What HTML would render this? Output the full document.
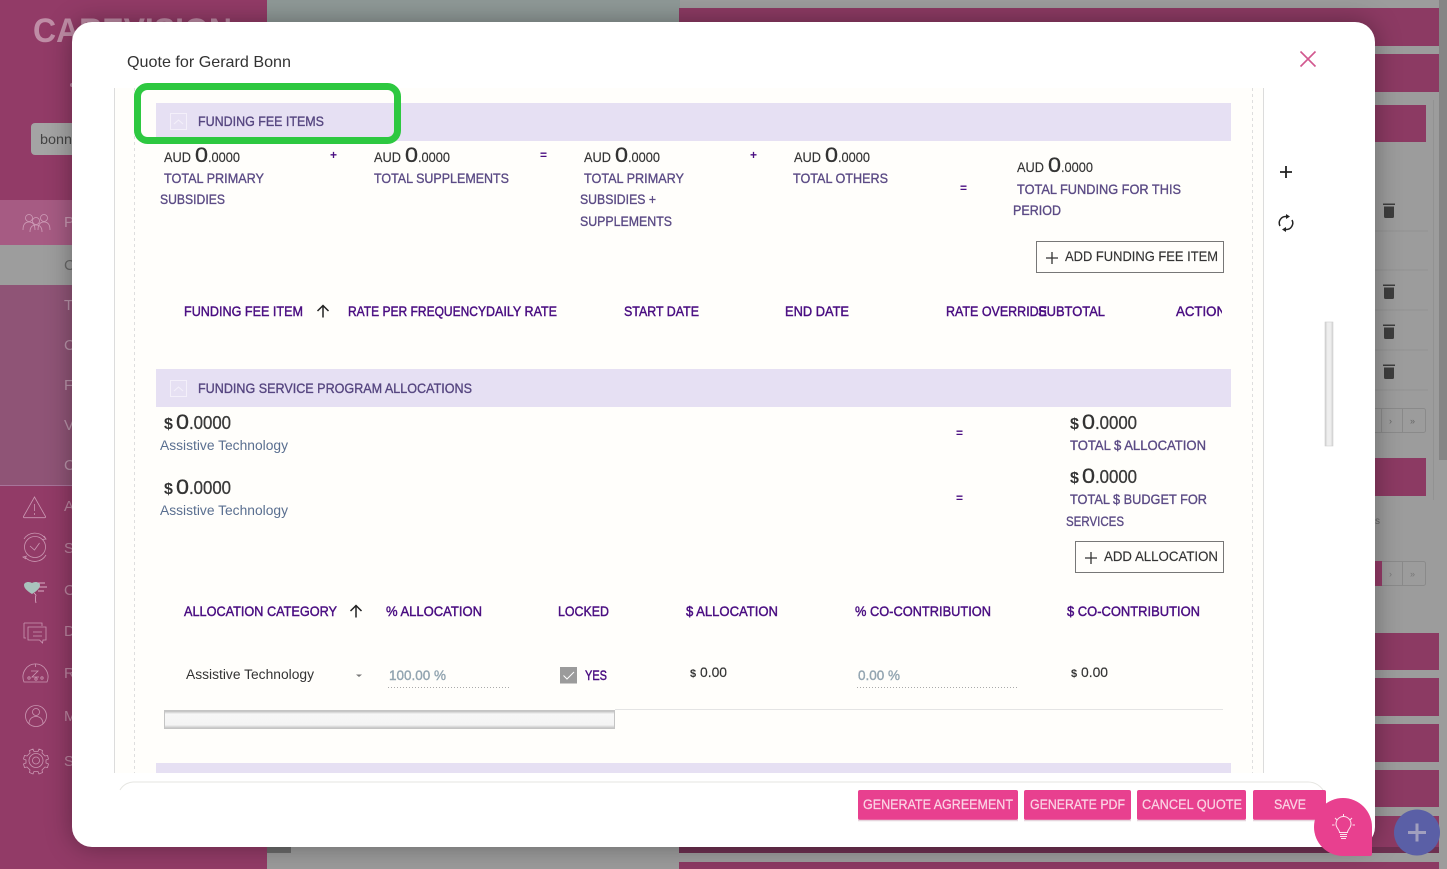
<!DOCTYPE html>
<html lang="en">
<head>
<meta charset="utf-8">
<title>Quote for Gerard Bonn</title>
<style>
html,body{margin:0;padding:0;width:1447px;height:869px;overflow:hidden;background:#9c9c9c;font-family:"Liberation Sans",sans-serif}
svg{position:absolute;left:0;top:0;display:block}
svg text{font-family:"Liberation Sans",sans-serif;white-space:pre}
.modal{position:absolute;left:72px;top:22px;width:1303px;height:825px;background:#fff;border-radius:20px;box-shadow:0 0 26px rgba(0,0,0,.34)}
.h{font-size:14px;fill:#4a0e82;stroke:#4a0e82;stroke-width:.45}
.l{font-size:14px;fill:#5b4b85;stroke:#5b4b85;stroke-width:.35}
.sec{font-size:14px;fill:#564680;stroke:#564680;stroke-width:.35}
.a{font-size:14px;fill:#333;stroke:#333;stroke-width:.15}
.z{font-size:21px;fill:#333;stroke:#333;stroke-width:.3}
.d{font-size:18px;fill:#3a3a3a;stroke:#3a3a3a;stroke-width:.3}
.op{font-size:12px;fill:#4a0e82;font-weight:bold}
.at{font-size:13.5px;fill:#5a6f90}
.btn{font-size:14px;fill:#333;stroke:#333;stroke-width:.15}
.inp{font-size:14px;fill:#93a5b1;stroke:#93a5b1;stroke-width:.4}
.pk{font-size:13.5px;fill:#fbd3e4;stroke:#fbd3e4;stroke-width:.25}
.side{font-size:15px;fill:#ffffff;fill-opacity:.38}
</style>
</head>
<body>
<svg width="1447" height="869" viewBox="0 0 1447 869">
  <rect x="0" y="0" width="1447" height="869" fill="#9c9c9c"/>
  <rect x="267" y="0" width="413" height="869" fill="#8f9997"/>
  <rect x="267" y="847" width="413" height="22" fill="#9b9b9b"/>
  <rect x="267" y="847" width="24" height="6" fill="#6a6a6a"/>

  <rect x="0" y="0" width="267" height="869" fill="#923b67"/>
  <rect x="0" y="200" width="267" height="45" fill="#a65b83"/>
  <rect x="0" y="245" width="267" height="40" fill="#9d9d9d"/>
  <rect x="0" y="285" width="267" height="200" fill="#8f5476"/>
  <rect x="0" y="485" width="267" height="1" fill="#a8749a"/>

  <text x="33" y="42" font-size="34" font-weight="bold" fill="#fff" fill-opacity=".42" textLength="199" lengthAdjust="spacingAndGlyphs">CAREVISION</text>
  <circle cx="72" cy="85" r="2" fill="#fff" fill-opacity=".4"/>
  <rect x="31" y="123" width="60" height="32" rx="4" fill="#a4a4a4"/>
  <text x="40" y="144" font-size="14" fill="#444" textLength="32" lengthAdjust="spacingAndGlyphs">bonn</text>

  <text class="side" x="64" y="227">P</text>
  <text x="64" y="270" font-size="15" fill="#666">C</text>
  <text class="side" x="64" y="310">T</text>
  <text class="side" x="64" y="350">C</text>
  <text class="side" x="64" y="390">F</text>
  <text class="side" x="64" y="430">V</text>
  <text class="side" x="64" y="470">C</text>
  <text class="side" x="64" y="511">A</text>
  <text class="side" x="64" y="553">S</text>
  <text class="side" x="64" y="595">C</text>
  <text class="side" x="64" y="636">D</text>
  <text class="side" x="64" y="678">R</text>
  <text class="side" x="64" y="721">M</text>
  <text class="side" x="64" y="766">S</text>

  <g fill="none" stroke="#d9aec5" stroke-width=".8" opacity=".8">
    <g>
      <circle cx="29" cy="218" r="3.5"/><path d="M23 230c0-5 2-8 6-8s6 3 6 8"/>
      <circle cx="44" cy="218" r="3.5"/><path d="M38 230c0-5 2-8 6-8s6 3 6 8"/>
      <circle cx="36" cy="221" r="3.5"/><path d="M30 232c0-5 2-7 6-7s6 2 6 7"/>
    </g>
    <path d="M34.500 497l11 19.500a.8.8 0 0 1-.7 1.200H24.200a.8.800 0 0 1-.7-1.200z"/>
    <path d="M34.500 504v7M34.500 513v2"/>
    <circle cx="35" cy="547" r="10.500"/>
    <path d="M30 546l4.500 4 5-7"/>
    <path d="M24 539a13 13 0 0 1 21-1M46 555a13 13 0 0 1-21 2M44 536l2 3-4 .5M26 559l-3-2 4-1"/>
    <path d="M24 623h18v3M24 623v15h2"/>
    <path d="M28 627h18v13h-3l-.5 3-3-3H28z"/>
    <path d="M33 632h9M33 636h9"/>
    <path d="M24 682a12.500 13 0 1 1 23 0z"/>
    <path d="M35.500 664v3M31 671h7l-6 6h7"/>
    <circle cx="29" cy="678" r="1.200"/><circle cx="36" cy="679" r="1.200"/><circle cx="42" cy="678" r="1.200"/>
    <circle cx="36" cy="716" r="10.500"/>
    <circle cx="36" cy="712" r="3.500"/>
    <path d="M29 724c0-5 3-7.500 7-7.500s7 2.500 7 7.500"/>
    <circle cx="36" cy="760.500" r="7"/><circle cx="36" cy="760.500" r="3.500"/>
    <path d="M33 749l1 2.500h4l1-2.500 3.500 1.500-.5 2.500 3 3 2.500-.5 1 3.500-2.500 1v3l2.500 1-1 3.500-2.500-.5-3 3 .5 2.500-3.500 1.500-1-2.500h-4l-1 2.500-3.500-1.500.5-2.500-3-3-2.500.5-1-3.500 2.500-1v-3l-2.500-1 1-3.500 2.500.5 3-3-.5-2.500z"/>
  </g>
  <path d="M24 585c0-3 5-4 8-2 3-2 8-1 8 2 0 4-5 7-8 9-3-2-8-5-8-9z" fill="#a9c3bd"/>
  <path d="M34 593l2 2M36 595c-1 3-.5 6 0 8" fill="none" stroke="#d9aec5" stroke-width=".8"/>
  <path d="M38 583h7M39 587h8M38 591h6" fill="none" stroke="#d9aec5" stroke-width="1"/>

  <g fill="#8c3a63">
    <rect x="679" y="8" width="760" height="38"/>
    <rect x="679" y="54" width="760" height="38"/>
    <rect x="679" y="105" width="747" height="37"/>
    <rect x="679" y="458" width="747" height="38"/>
    <rect x="679" y="633" width="760" height="37"/>
    <rect x="679" y="678" width="760" height="38"/>
    <rect x="679" y="724" width="760" height="38"/>
    <rect x="679" y="770" width="760" height="37"/>
    <rect x="679" y="816" width="760" height="37"/>
    <rect x="679" y="862" width="760" height="7"/>
  </g>
  <rect x="679" y="847" width="760" height="6" fill="#6d3050"/>
  <rect x="1439" y="0" width="8" height="460" fill="#858585"/>
  <rect x="1439" y="460" width="8" height="409" fill="#9c9c9c"/>
  <rect x="1433" y="100" width="1" height="400" fill="#929292"/>
  <g stroke="#929292" stroke-width="1">
    <path d="M1375 231h53M1375 270h53M1375 310h53M1375 350h53M1375 390h53"/>
  </g>
  <g fill="#3d3d3d" transform="translate(0,-1)">
    <path d="M1383 204.500h12v1.500h-12zM1384 207.500h10v10a1.500 1.500 0 0 1-1.500 1.500h-7a1.500 1.500 0 0 1-1.500-1.500z"/>
    <path d="M1383 285.500h12v1.500h-12zM1384 288.500h10v10a1.500 1.500 0 0 1-1.500 1.500h-7a1.500 1.500 0 0 1-1.500-1.500z"/>
    <path d="M1383 325.500h12v1.500h-12zM1384 328.500h10v10a1.500 1.500 0 0 1-1.500 1.500h-7a1.500 1.500 0 0 1-1.500-1.500z"/>
    <path d="M1383 365.500h12v1.500h-12zM1384 368.500h10v10a1.500 1.500 0 0 1-1.500 1.500h-7a1.500 1.500 0 0 1-1.500-1.500z"/>
  </g>
  <g fill="none" stroke="#8a8a8a">
    <rect x="1370.500" y="408.500" width="55" height="24" rx="2"/>
    <path d="M1381.500 408.500v24M1402.500 408.500v24"/>
    <rect x="1370.500" y="561.500" width="55" height="24" rx="2"/>
    <path d="M1402.500 561.500v24"/>
  </g>
  <rect x="1370" y="561" width="12" height="25" fill="#953b68"/>
  <text x="1389" y="424" font-size="9" fill="#666">›</text>
  <text x="1410" y="424" font-size="9" fill="#666">»</text>
  <text x="1389" y="577" font-size="9" fill="#777">›</text>
  <text x="1410" y="577" font-size="9" fill="#777">»</text>
  <text x="1375" y="524" font-size="10" fill="#666">s</text>
</svg>

<div class="modal"></div>

<svg width="1447" height="869" viewBox="0 0 1447 869">
  <rect x="115" y="88" width="1148" height="685" fill="#fffefb"/>
  <path d="M114.500 88v685M1263.500 88v685" stroke="#dcdcdc" stroke-width="1" fill="none"/>
  <path d="M134.500 88v685M1252.500 88v685" stroke="#dedede" stroke-width="1" stroke-dasharray="3 3" fill="none"/>

  <text x="127" y="67" font-size="16" fill="#333" textLength="164" lengthAdjust="spacingAndGlyphs">Quote for Gerard Bonn</text>
  <path d="M1300.500 51.500l15 15M1315.500 51.500l-15 15" stroke="#d2588f" stroke-width="1.600" fill="none"/>

  <rect x="156" y="103" width="1075" height="38" fill="#e6e0f3"/>
  <rect x="156" y="369" width="1075" height="38" fill="#e6e0f3"/>
  <rect x="156" y="763" width="1075" height="10" fill="#e6e0f3"/>

  <g fill="none" stroke="#f4f0fa" stroke-width="1">
    <rect x="170.500" y="113.500" width="16" height="16"/>
    <path d="M174 124l4.500-4 4.500 4"/>
    <rect x="170.500" y="380.500" width="16" height="16"/>
    <path d="M174 391l4.500-4 4.500 4"/>
  </g>

  <text class="sec" x="198" y="126" textLength="126" lengthAdjust="spacingAndGlyphs">FUNDING FEE ITEMS</text>
  <text class="sec" x="198" y="393" textLength="274" lengthAdjust="spacingAndGlyphs">FUNDING SERVICE PROGRAM ALLOCATIONS</text>

  <rect x="137.500" y="86.500" width="260" height="54" rx="10" fill="none" stroke="#2dc840" stroke-width="7"/>

  <text class="a" x="164" y="162" textLength="27" lengthAdjust="spacingAndGlyphs">AUD</text>
  <text class="z" x="195" y="162" textLength="13" lengthAdjust="spacingAndGlyphs">0</text>
  <text class="a" x="208" y="162" font-size="15" textLength="32" lengthAdjust="spacingAndGlyphs">.0000</text>
  <text class="a" x="374" y="162" textLength="27" lengthAdjust="spacingAndGlyphs">AUD</text>
  <text class="z" x="405" y="162" textLength="13" lengthAdjust="spacingAndGlyphs">0</text>
  <text class="a" x="418" y="162" textLength="32" lengthAdjust="spacingAndGlyphs">.0000</text>
  <text class="a" x="584" y="162" textLength="27" lengthAdjust="spacingAndGlyphs">AUD</text>
  <text class="z" x="615" y="162" textLength="13" lengthAdjust="spacingAndGlyphs">0</text>
  <text class="a" x="628" y="162" textLength="32" lengthAdjust="spacingAndGlyphs">.0000</text>
  <text class="a" x="794" y="162" textLength="27" lengthAdjust="spacingAndGlyphs">AUD</text>
  <text class="z" x="825" y="162" textLength="13" lengthAdjust="spacingAndGlyphs">0</text>
  <text class="a" x="838" y="162" textLength="32" lengthAdjust="spacingAndGlyphs">.0000</text>
  <text class="a" x="1017" y="172" textLength="27" lengthAdjust="spacingAndGlyphs">AUD</text>
  <text class="z" x="1048" y="172" textLength="13" lengthAdjust="spacingAndGlyphs">0</text>
  <text class="a" x="1061" y="172" textLength="32" lengthAdjust="spacingAndGlyphs">.0000</text>

  <text class="l" x="164" y="183" textLength="100" lengthAdjust="spacingAndGlyphs">TOTAL PRIMARY</text>
  <text class="l" x="160" y="204" textLength="65" lengthAdjust="spacingAndGlyphs">SUBSIDIES</text>
  <text class="l" x="374" y="183" textLength="135" lengthAdjust="spacingAndGlyphs">TOTAL SUPPLEMENTS</text>
  <text class="l" x="584" y="183" textLength="100" lengthAdjust="spacingAndGlyphs">TOTAL PRIMARY</text>
  <text class="l" x="580" y="204" textLength="76" lengthAdjust="spacingAndGlyphs">SUBSIDIES +</text>
  <text class="l" x="580" y="226" textLength="92" lengthAdjust="spacingAndGlyphs">SUPPLEMENTS</text>
  <text class="l" x="793" y="183" textLength="95" lengthAdjust="spacingAndGlyphs">TOTAL OTHERS</text>
  <text class="l" x="1017" y="194" textLength="164" lengthAdjust="spacingAndGlyphs">TOTAL FUNDING FOR THIS</text>
  <text class="l" x="1013" y="215" textLength="48" lengthAdjust="spacingAndGlyphs">PERIOD</text>

  <text class="op" x="330" y="159">+</text>
  <text class="op" x="540" y="159">=</text>
  <text class="op" x="750" y="159">+</text>
  <text class="op" x="960" y="192">=</text>

  <rect x="1036.500" y="241.500" width="187" height="31" fill="none" stroke="#777"/>
  <path d="M1046 258h12M1052 252v12" stroke="#333" stroke-width="1.300" fill="none"/>
  <text class="btn" x="1065" y="261" textLength="153" lengthAdjust="spacingAndGlyphs">ADD FUNDING FEE ITEM</text>

  <text class="h" x="184" y="316" textLength="119" lengthAdjust="spacingAndGlyphs">FUNDING FEE ITEM</text>
  <path d="M323 317.500v-12M317.500 311l5.500-5.500 5.500 5.500" fill="none" stroke="#222" stroke-width="1.500"/>
  <text class="h" x="348" y="316" textLength="138" lengthAdjust="spacingAndGlyphs">RATE PER FREQUENCY</text>
  <text class="h" x="486" y="316" textLength="71" lengthAdjust="spacingAndGlyphs">DAILY RATE</text>
  <text class="h" x="624" y="316" textLength="75" lengthAdjust="spacingAndGlyphs">START DATE</text>
  <text class="h" x="785" y="316" textLength="64" lengthAdjust="spacingAndGlyphs">END DATE</text>
  <text class="h" x="946" y="316" textLength="101" lengthAdjust="spacingAndGlyphs">RATE OVERRIDE</text>
  <text class="h" x="1038" y="316" textLength="67" lengthAdjust="spacingAndGlyphs">SUBTOTAL</text>
  <svg x="1170" y="300" width="52" height="22"><text class="h" x="6" y="16" textLength="50" lengthAdjust="spacingAndGlyphs">ACTION</text></svg>

  <text x="164" y="429" font-size="16" font-weight="bold" fill="#333">$</text>
  <text class="z" x="176" y="429" textLength="13" lengthAdjust="spacingAndGlyphs">0</text>
  <text class="d" x="189" y="429" textLength="42" lengthAdjust="spacingAndGlyphs">.0000</text>
  <text class="at" x="160" y="450" textLength="128" lengthAdjust="spacingAndGlyphs">Assistive Technology</text>
  <text x="164" y="494" font-size="16" font-weight="bold" fill="#333">$</text>
  <text class="z" x="176" y="494" textLength="13" lengthAdjust="spacingAndGlyphs">0</text>
  <text class="d" x="189" y="494" textLength="42" lengthAdjust="spacingAndGlyphs">.0000</text>
  <text class="at" x="160" y="515" textLength="128" lengthAdjust="spacingAndGlyphs">Assistive Technology</text>

  <text class="op" x="956" y="437">=</text>
  <text class="op" x="956" y="502">=</text>

  <text x="1070" y="429" font-size="16" font-weight="bold" fill="#333">$</text>
  <text class="z" x="1082" y="429" textLength="13" lengthAdjust="spacingAndGlyphs">0</text>
  <text class="d" x="1095" y="429" textLength="42" lengthAdjust="spacingAndGlyphs">.0000</text>
  <text class="l" x="1070" y="450" textLength="136" lengthAdjust="spacingAndGlyphs">TOTAL $ ALLOCATION</text>
  <text x="1070" y="483" font-size="16" font-weight="bold" fill="#333">$</text>
  <text class="z" x="1082" y="483" textLength="13" lengthAdjust="spacingAndGlyphs">0</text>
  <text class="d" x="1095" y="483" textLength="42" lengthAdjust="spacingAndGlyphs">.0000</text>
  <text class="l" x="1070" y="504" textLength="137" lengthAdjust="spacingAndGlyphs">TOTAL $ BUDGET FOR</text>
  <text class="l" x="1066" y="526" textLength="58" lengthAdjust="spacingAndGlyphs">SERVICES</text>

  <rect x="1075.500" y="541.500" width="148" height="31" fill="none" stroke="#777"/>
  <path d="M1085 558h12M1091 552v12" stroke="#333" stroke-width="1.300" fill="none"/>
  <text class="btn" x="1104" y="561" textLength="114" lengthAdjust="spacingAndGlyphs">ADD ALLOCATION</text>

  <text class="h" x="184" y="616" textLength="153" lengthAdjust="spacingAndGlyphs">ALLOCATION CATEGORY</text>
  <path d="M356 617.500v-12M350.500 611l5.500-5.500 5.500 5.500" fill="none" stroke="#222" stroke-width="1.500"/>
  <text class="h" x="386" y="616" textLength="96" lengthAdjust="spacingAndGlyphs">% ALLOCATION</text>
  <text class="h" x="558" y="616" textLength="51" lengthAdjust="spacingAndGlyphs">LOCKED</text>
  <text class="h" x="686" y="616" textLength="92" lengthAdjust="spacingAndGlyphs">$ ALLOCATION</text>
  <text class="h" x="855" y="616" textLength="136" lengthAdjust="spacingAndGlyphs">% CO-CONTRIBUTION</text>
  <text class="h" x="1067" y="616" textLength="133" lengthAdjust="spacingAndGlyphs">$ CO-CONTRIBUTION</text>

  <text x="186" y="679" font-size="13.500" fill="#333" textLength="128" lengthAdjust="spacingAndGlyphs">Assistive Technology</text>
  <path d="M356 674.500h6l-3 2.500z" fill="#777"/>
  <text class="inp" x="389" y="680" textLength="57" lengthAdjust="spacingAndGlyphs">100.00 %</text>
  <path d="M388 687.500h121" stroke="#aaa" stroke-width="1" stroke-dasharray="1 2" fill="none"/>
  <rect x="560" y="667" width="17" height="16.500" fill="#9b9b9b"/>
  <path d="M563.500 675.500l3.500 3.500 7-7" fill="none" stroke="#fff" stroke-width="1"/>
  <text class="h" x="585" y="680" textLength="22" lengthAdjust="spacingAndGlyphs">YES</text>
  <text x="690" y="677" font-size="11" font-weight="bold" fill="#333">$</text>
  <text class="a" x="700" y="677" font-size="14.500" textLength="27" lengthAdjust="spacingAndGlyphs">0.00</text>
  <text class="inp" x="858" y="680" textLength="42" lengthAdjust="spacingAndGlyphs">0.00 %</text>
  <path d="M857 687.500h161" stroke="#aaa" stroke-width="1" stroke-dasharray="1 2" fill="none"/>
  <text x="1071" y="677" font-size="11" font-weight="bold" fill="#333">$</text>
  <text class="a" x="1081" y="677" font-size="14.500" textLength="27" lengthAdjust="spacingAndGlyphs">0.00</text>

  <path d="M615 709.500h608" stroke="#e4e4e4" fill="none"/>
  <defs>
    <linearGradient id="hs" x1="0" y1="0" x2="0" y2="1">
      <stop offset="0" stop-color="#b5b5b5"/><stop offset=".2" stop-color="#f7f7f7"/><stop offset=".8" stop-color="#f4f4f4"/><stop offset="1" stop-color="#bdbdbd"/>
    </linearGradient>
    <linearGradient id="vs" x1="0" y1="0" x2="1" y2="0">
      <stop offset="0" stop-color="#c8c8c8"/><stop offset=".3" stop-color="#eee"/><stop offset=".7" stop-color="#eee"/><stop offset="1" stop-color="#cfcfcf"/>
    </linearGradient>
  </defs>
  <rect x="164.500" y="710.500" width="450" height="18" fill="url(#hs)" stroke="#c4c4c4" stroke-width="1"/>
  <rect x="1325" y="322" width="8" height="124" fill="url(#vs)" stroke="#d0d0d0" stroke-width=".6"/>

  <path d="M1280 172h12M1286 166v12" stroke="#222" stroke-width="1.800" fill="none"/>
  <g fill="none" stroke="#222" stroke-width="1.500">
    <path d="M1280 226a6.500 6.500 0 0 1 6-9.500h1.500"/>
    <path d="M1292 220a6.500 6.500 0 0 1-6 9.500h-1.500"/>
  </g>
  <path d="M1286 214l4 2.500-4 2.500zM1286 227l-4 2.500 4 2.500z" fill="#222"/>

  <rect x="115" y="773" width="1215" height="74" fill="#fff"/>
  <path d="M120 790a16 16 0 0 1 13-8h1174a18 18 0 0 1 18 12" fill="none" stroke="#e6e6e2" stroke-width="1"/>

  <g fill="#e8408f">
    <rect x="858" y="790" width="160" height="30" rx="2"/>
    <rect x="1024" y="790" width="107" height="30" rx="2"/>
    <rect x="1137" y="790" width="109" height="30" rx="2"/>
    <rect x="1253" y="790" width="73" height="30" rx="2"/>
  </g>
  <path d="M858 820.500h160M1024 820.500h107M1137 820.500h109M1253 820.500h73" stroke="#e6d5dd" stroke-width="1.500" fill="none"/>
  <text class="pk" x="863" y="809" textLength="150" lengthAdjust="spacingAndGlyphs">GENERATE AGREEMENT</text>
  <text class="pk" x="1030" y="809" textLength="95" lengthAdjust="spacingAndGlyphs">GENERATE PDF</text>
  <text class="pk" x="1142" y="809" textLength="100" lengthAdjust="spacingAndGlyphs">CANCEL QUOTE</text>
  <text class="pk" x="1274" y="809" textLength="32" lengthAdjust="spacingAndGlyphs">SAVE</text>

  <circle cx="1417" cy="832.500" r="23" fill="#5a5fa6"/>
  <path d="M1408 832.500h18M1417 823.500v18" stroke="#a19fbe" stroke-width="3" fill="none"/>

  <path d="M1343 798a29 29 0 0 1 29 29v27a2 2 0 0 1-2 2h-27a29 29 0 0 1 0-58z" fill="#e8408f"/>
  <g fill="none" stroke="#fde3ee" stroke-width="1">
    <path d="M1339.500 832.500c0-3-3.500-4.500-3.500-8.500a7.500 7.500 0 0 1 15 0c0 4-3.500 5.500-3.500 8.500z"/>
    <path d="M1340 834.500h7M1340 836.500h7M1341 838.500h5"/>
    <path d="M1343.500 814v3M1335 818l2 2M1352 818l-2 2M1332 825h2.500M1352.500 825h2.500"/>
  </g>
</svg>
</body>
</html>
